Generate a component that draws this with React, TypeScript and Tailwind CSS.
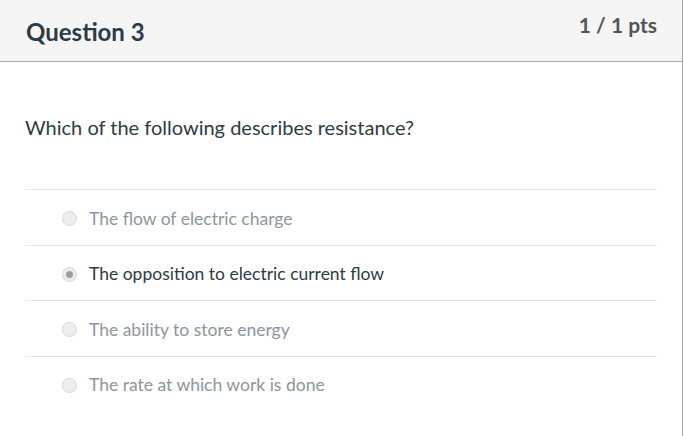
import React from "react";

const answers = [
  { text: "The flow of electric charge", selected: false },
  { text: "The opposition to electric current flow", selected: true },
  { text: "The ability to store energy", selected: false },
  { text: "The rate at which work is done", selected: false },
];

function Radio({ selected }: { selected: boolean }) {
  return (
    <span className="flex h-[15px] w-[15px] shrink-0 items-center justify-center rounded-full border border-[#d6d6d6] bg-[#eeeeee]">
      {selected && <span className="h-[7px] w-[7px] rounded-full bg-[#9d9d9d]" />}
    </span>
  );
}

export default function App() {
  return (
    <div className="h-[436px] w-[684px] bg-white" style={{ fontFamily: "Lato, 'Open Sans', sans-serif" }}>
      <div className="h-full w-[683px] border-r border-[#a9a9a9]">
        <div className="flex h-[62px] items-start justify-between border-b border-[#aaaaaa] bg-[#f5f5f5] pl-[26px] pr-[25px]">
          <h2 className="mt-[16px] text-[24px] font-bold leading-[32px] text-[#2d3b45]">Question 3</h2>
          <span className="mt-[11px] text-[21px] font-bold leading-[28px] text-[#555555]">1 / 1 pts</span>
        </div>
        <div className="px-[25px]">
          <p className="mt-[51px] text-[20px] leading-[28px] text-[#2d3b45]">
            Which of the following describes resistance?
          </p>
          <div className="mt-[48px]">
            {answers.map((a) => (
              <div key={a.text} className="flex h-[55.5px] items-center gap-[12px] border-t border-[#e5e5e5] pl-[37px] pt-[3px]">
                <Radio selected={a.selected} />
                <span className={`text-[17.5px] ${a.selected ? "text-[#2d3b45]" : "text-[#8b969e]"}`}>{a.text}</span>
              </div>
            ))}
          </div>
        </div>
      </div>
    </div>
  );
}
